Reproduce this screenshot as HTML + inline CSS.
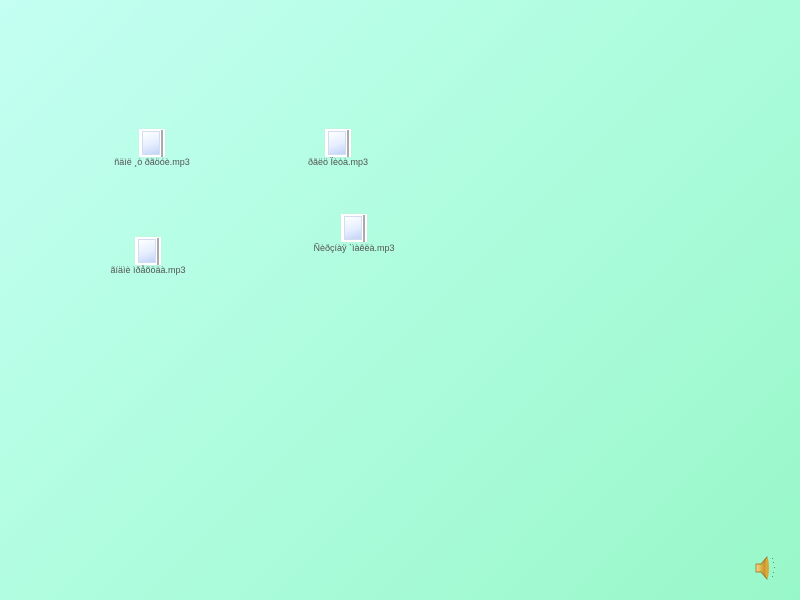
<!DOCTYPE html>
<html><head><meta charset="utf-8"><style>
html,body{margin:0;padding:0}
body{width:800px;height:600px;overflow:hidden;position:relative;background:linear-gradient(135deg,#c4fff2 0%,#b0fde0 45%,#98f7c8 100%);font-family:"Liberation Sans",sans-serif}
.ic{position:absolute;width:26px;height:28px;background:#fff;box-shadow:0 0 1px #ddd}
.ic:before{content:"";position:absolute;left:3px;top:2px;width:18px;height:24px;background:linear-gradient(160deg,#fff 0%,#e6eeff 55%,#c2d3f7 100%);border:1px solid #d4ddf0;box-sizing:border-box}
.ic:after{content:"";position:absolute;right:2px;top:1px;width:2px;height:27px;background:#aaa}
.lb{position:absolute;font-size:9px;color:#555;white-space:nowrap;transform:translateX(-50%)}
</style></head><body>
<div class="ic" style="left:139px;top:129px"></div>
<div class="lb" style="left:152px;top:157px">ñäìë ¸ò ðãöóè.mp3</div>
<div class="ic" style="left:325px;top:129px"></div>
<div class="lb" style="left:338px;top:157px">ðãëö Ïèòà.mp3</div>
<div class="ic" style="left:341px;top:214px"></div>
<div class="lb" style="left:354px;top:243px">Ñèðçíàÿ `ìàêëà.mp3</div>
<div class="ic" style="left:135px;top:237px"></div>
<div class="lb" style="left:148px;top:265px">ãíäìè ìðåõöäà.mp3</div>
<svg style="position:absolute;left:752px;top:553px" width="28" height="30" viewBox="0 0 28 30">
<defs><linearGradient id="g" x1="0" x2="1"><stop offset="0" stop-color="#f8dd80"/><stop offset="1" stop-color="#b8801a"/></linearGradient></defs>
<path d="M4 11h5l6-7v22l-6-7H4z" fill="url(#g)" stroke="#96661a" stroke-width="0.7"/>
<ellipse cx="15" cy="15" rx="2" ry="10" fill="#d9a83a"/>
<g fill="#557" opacity="0.7"><rect x="20" y="5" width="1" height="1"/><rect x="21" y="9" width="1" height="1"/><rect x="22" y="14" width="1" height="1"/><rect x="21" y="19" width="1" height="1"/><rect x="20" y="23" width="1" height="1"/></g>
</svg>
</body></html>
